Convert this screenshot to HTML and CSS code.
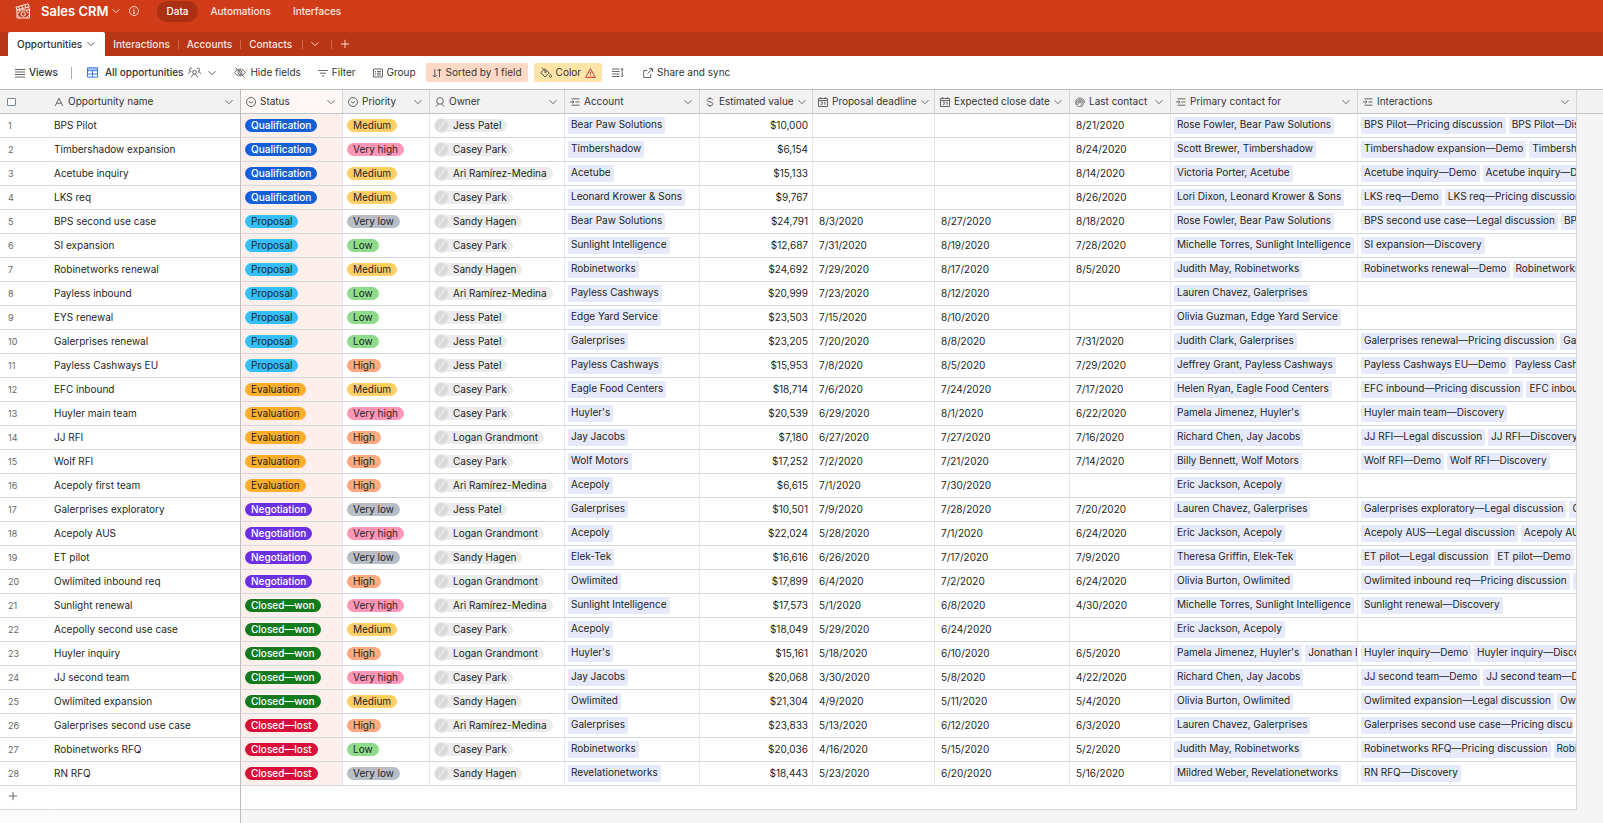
FILE: index.html
```
<!DOCTYPE html>
<html lang="en">
<head>
  <meta charset="UTF-8" />
  <meta name="viewport" content="width=device-width, initial-scale=1.0" />
  <title>Sales CRM</title>
  <link rel="stylesheet" href="styles.css">
</head>
<body>
  <!-- shared icons -->
  <svg class="sprite" aria-hidden="true">
    <symbol id="i-chevron" viewBox="0 0 8 8"><path d="M.5 2.2 4 5.7 7.5 2.2"/></symbol>
    <symbol id="i-plus" viewBox="0 0 10 10"><path d="M5 .8v8.4M.8 5h8.4"/></symbol>
    <symbol id="i-text" viewBox="0 0 10 10"><path d="M1.2 9 5 1.2 8.8 9M2.7 6.2h4.6"/></symbol>
    <symbol id="i-select" viewBox="0 0 10 10"><circle cx="5" cy="5" r="4.5"/><path d="M3 4.3 5 6.2l2-1.9"/></symbol>
    <symbol id="i-user" viewBox="0 0 10 10"><circle cx="5" cy="3.9" r="3.3"/><path d="M3.6 6.9.7 9.6M6.4 6.9l2.9 2.7"/></symbol>
    <symbol id="i-link" viewBox="0 0 10 10"><path d="M1.5 1.8h8M5.5 5h4M1.5 8.2h8M0 5h3.6M2.4 3.6 4 5 2.4 6.4"/></symbol>
    <symbol id="i-dollar" viewBox="0 0 10 10"><path d="M7.8 3.2C7.6 2 6.6 1.5 5 1.5c-1.700 0-2.800.7-2.800 1.800C2.200 5.700 8 4.200 8 6.800c0 1.200-1.200 1.800-3 1.800-1.700 0-2.900-.6-3-1.900M5 0v1.500M5 8.600V10"/></symbol>
    <symbol id="i-date" viewBox="0 0 10 10"><path d="M.5 1.500h9v8h-9zM.5 3.500h9M2.700 0v2.200M7.300 0v2.200M2.800 5h1.700L3.700 6.100c1.300 0 1.100 1.900-.9 1.500M6 5.500l1-.5v2.900"/></symbol>
    <symbol id="i-rollup" viewBox="0 0 10 10"><g stroke-width=".8"><circle cx="5" cy="5" r=".8"/><path d="M8.400 8.300A4.500 4.500 0 1 1 9.500 5v1M2.800 8A3.300 3.300 0 1 1 8.300 5.600c0 1.200-.4 2-.9 2.700M3.700 6.700A2 2 0 1 1 7 5c0 1.800-.7 3.200-2 4.500"/></g></symbol>
  </svg>

  <header class="topbar">
    <svg class="logo" viewBox="0 0 16 16">
      <path d="M1 4.200 13.200.8l1 3L2 7z"/><path d="m3.300 3.500 1.500 2.700M6.500 2.600l1.500 2.700M9.700 1.700l1.500 2.700"/>
      <path d="M2 7h12.500v8H2zM2 10c2 0 3-1 3-3M14.500 10c-2 0-3-1-3-3M2 12.500c1.500 0 2.500 1 2.500 2.500M14.500 12.500c-1.500 0-2.500 1-2.500 2.500"/>
      <circle cx="8.200" cy="11" r="2.200"/><path d="M13.200 3.800 15 7"/>
    </svg>
    <h1>Sales CRM</h1>
    <svg class="chev light"><use href="#i-chevron"/></svg>
    <svg class="info" viewBox="0 0 10 10"><circle cx="5" cy="5" r="4.500"/><path d="M4.200 4.500H5v2.800M4 7.300h2M5 2.500v1"/></svg>
    <nav class="modes">
      <a href="#" class="current">Data</a>
      <a href="#">Automations</a>
      <a href="#">Interfaces</a>
    </nav>
  </header>

  <nav class="tabs">
    <a href="#" class="tab active">Opportunities <svg class="chev"><use href="#i-chevron"/></svg></a>
    <a href="#" class="tab">Interactions</a>
    <a href="#" class="tab">Accounts</a>
    <a href="#" class="tab">Contacts</a>
    <button type="button" class="tab" aria-label="More tables"><svg class="chev light"><use href="#i-chevron"/></svg></button>
    <button type="button" class="tab" aria-label="Add table"><svg class="plus light"><use href="#i-plus"/></svg></button>
  </nav>

  <div class="toolbar">
    <button type="button" class="strong views">
      <svg viewBox="0 0 10 10"><path d="M0 1.500h10M0 4h10M0 6.500h10M0 9h10"/></svg>Views
    </button>
    <button type="button" class="strong current-view">
      <svg class="blue" viewBox="0 0 11 11"><path class="fill" d="M.5.8h10v2.700H.5z"/><path d="M.5.8h10v9.400H.5zM.5 3.700h10M.5 7h10M5.500 3.700v6.500"/></svg>
      <span>All opportunities</span>
      <svg class="people" viewBox="0 0 13 11"><circle cx="6.500" cy="5.300" r="1.900"/><path d="M3.500 10.300c.2-1.700 1.300-3 3-3s2.800 1.300 3 3M4 1.400A1.700 1.700 0 1 0 3 4.500M2.800 4.600C1.500 4.800.7 5.600.5 6.800M9 1.400a1.700 1.700 0 1 1 1 3.100M10.200 4.600c1.300.2 2.100 1 2.300 2.200"/></svg>
      <svg class="chev"><use href="#i-chevron"/></svg>
    </button>
    <button type="button">
      <svg class="wide" viewBox="0 0 12 11"><path d="M.6 5.500C2 3.300 3.800 2.200 6 2.200s4 1.100 5.400 3.300C10 7.700 8.200 8.800 6 8.800S2 7.700.6 5.500zM1.800.8l8.400 9.400"/><circle cx="6" cy="5.500" r="1.900"/></svg>Hide fields
    </button>
    <button type="button">
      <svg viewBox="0 0 10 10"><path d="M0 2.500h10M2 5.200h6M3.800 8h2.400"/></svg>Filter
    </button>
    <button type="button">
      <svg viewBox="0 0 10 10"><path d="M.5 1h9v8h-9zM2 3.500h1M4 3.500h4M2 5.200h1M4 5.200h4M2 7h1M4 7h4"/></svg>Group
    </button>
    <button type="button" class="sorted">
      <svg viewBox="0 0 10 10"><path d="M2.800 1v8M.8 7l2 2 2-2M7.500 9V1M5.500 3l2-2 2 2"/></svg>Sorted by 1 field
    </button>
    <button type="button" class="colored">
      <svg class="wide" viewBox="0 0 12 11"><path d="M4.800 1.800 9.300 6 5 10 .7 5.800zM1.800.6l3.600 3.600"/><circle cx="5.500" cy="5" r=".8"/><path d="M10.600 7.400c.8 1.100 1 1.500 1 1.900a1 1 0 0 1-2 0c0-.4.200-.8 1-1.900z"/></svg>Color
      <svg class="warn" viewBox="0 0 11 10"><path d="M5.500.7 10.400 9.400H.6zM5.500 3.800v2.700M5.500 7.500v.9"/></svg>
    </button>
    <button type="button" aria-label="Row height">
      <svg class="wide" viewBox="0 0 12 10"><path d="M0 1.500h7.500M0 4h7.500M0 6.500h7.500M0 9h7.500M10.200 1v8.500M9.200 2.200l1-1.200 1 1.200M9.200 8.200l1 1.200 1-1.200"/></svg>
    </button>
    <button type="button" class="share">
      <svg viewBox="0 0 10 10"><path d="M4.200 2.500H.7v7h7V6M6 .6h3.500v3.500M9.400.7 4.500 5.500"/></svg>Share and sync
    </button>
  </div>

  <main class="grid">
    <table>
      <colgroup>
        <col class="c-num"><col class="c-name"><col class="c-status"><col class="c-priority"><col class="c-owner"><col class="c-account"><col class="c-value"><col class="c-proposal"><col class="c-close"><col class="c-last"><col class="c-primary"><col class="c-inter"><col>
      </colgroup>
      <thead>
        <tr id="head"></tr>
      </thead>
      <tbody id="rows"></tbody>
      <tfoot>
        <tr>
          <td class="num"><button type="button" class="add" aria-label="Add record"><svg class="plus"><use href="#i-plus"/></svg></button></td>
          <td class="name"></td>
          <td colspan="10" class="rest"></td>
          <td class="filler"></td>
        </tr>
      </tfoot>
    </table>
    <div class="below"><div class="below-frozen"></div></div>
  </main>

  <script src="script.js"></script>
</body>
</html>
```
FILE: styles.css
```
* {
  box-sizing: border-box;
}
body {
  margin: 0;
  min-height: 100vh;
  display: flex;
  flex-direction: column;
  font-family: Inter, "Liberation Sans", sans-serif;
  font-size: 10px;
  line-height: 13px;
  color: #1d1f25;
  background: #fff;
}
a {
  color: inherit;
  text-decoration: none;
}
button {
  font: inherit;
  color: inherit;
  background: none;
  border: none;
  padding: 0;
}
svg {
  flex: none;
  width: 10px;
  height: 10px;
  fill: none;
  stroke: #666;
  stroke-width: 1;
}
.sprite {
  position: absolute;
  width: 0;
  height: 0;
}
.chev {
  width: 8px;
  height: 8px;
}
.light {
  stroke: #f9d5cb;
}

/* top bar */
.topbar {
  display: flex;
  align-items: center;
  height: 32px;
  padding: 0 15px 10px;
  background: #d03c18;
  color: #fff;
}
.topbar .logo {
  width: 16px;
  height: 16px;
  stroke: #fdeeea;
}
.topbar h1 {
  margin: 0 4px 0 10px;
  font-size: 13px;
  line-height: 16px;
  font-weight: 600;
}
.topbar .info {
  margin-left: 9px;
  stroke: #f9d5cb;
}
.modes {
  display: flex;
  gap: 4px;
  margin-left: 18px;
  font-weight: 500;
  color: #fbe6e0;
}
.modes a {
  padding: 4px 9px;
  border-radius: 11px;
}
.modes .current {
  background: #a93013;
  color: #fff;
}

/* table tabs */
.tabs {
  display: flex;
  align-items: center;
  height: 24px;
  padding-left: 8px;
  background: #b83616;
}
.tab {
  display: flex;
  align-items: center;
  height: 24px;
  padding: 0 8px;
  font-weight: 500;
  color: #fbe6e0;
}
.tab.active {
  gap: 5px;
  padding: 0 10px 0 9px;
  background: #fff;
  color: #333;
  border-radius: 2px 2px 0 0;
}
.tab + .tab:not(.active)::before {
  content: "";
  width: 1px;
  height: 9px;
  margin: 0 8px 0 -8px;
  background: #cf6a50;
}
.tab.active + .tab::before {
  display: none;
}
button.tab {
  padding: 0 10px;
}

/* toolbar */
.toolbar {
  display: flex;
  align-items: center;
  height: 33px;
  padding: 0 16px 0 8px;
  color: #333;
}
.toolbar button {
  display: flex;
  align-items: center;
  gap: 4px;
  height: 19px;
  padding: 0 7px;
  margin-right: 3px;
  border-radius: 2px;
}
.toolbar .strong {
  font-weight: 500;
}
.toolbar .wide {
  width: 12px;
  height: 11px;
}
.toolbar .people {
  width: 13px;
  height: 11px;
  margin: 0 3px 0 1px;
}
.toolbar .views {
  padding-right: 14px;
  margin-right: 15px;
  position: relative;
}
.toolbar .views::after {
  content: "";
  position: absolute;
  right: 0;
  width: 1px;
  height: 12px;
  background: #aaa;
}
.toolbar .current-view {
  padding: 0;
  margin-right: 11px;
}
.toolbar .current-view span {
  margin-left: 3px;
}
.toolbar .blue {
  width: 11px;
  height: 11px;
  stroke: #3e7be0;
}
.toolbar .blue .fill {
  fill: #a9c6f5;
  stroke: none;
}
.toolbar .sorted {
  padding: 0 6px;
  margin-right: 6px;
  background: #ffd9c6;
}
.toolbar .colored {
  padding: 0 6px;
  background: #ffe4a8;
}
.toolbar .sorted svg,
.toolbar .colored svg {
  stroke: #555;
}
.toolbar .colored .warn {
  width: 11px;
  stroke: #dc3545;
}
.toolbar .share {
  margin-left: 2px;
}

/* grid */
.grid {
  flex: 1;
  display: flex;
  flex-direction: column;
  border-top: 1px solid #bcbdbf;
}
table {
  width: 100%;
  table-layout: fixed;
  border-collapse: separate;
  border-spacing: 0;
}
.c-num { width: 49px; }
.c-name { width: 192px; }
.c-status { width: 102px; }
.c-priority { width: 87px; }
.c-owner { width: 135px; }
.c-account { width: 135px; }
.c-value { width: 113px; }
.c-proposal { width: 122px; }
.c-close { width: 135px; }
.c-last { width: 101px; }
.c-primary { width: 187px; }
.c-inter { width: 219px; }

th {
  height: 24px;
  padding: 0;
  font-weight: 400;
  text-align: left;
  color: #333;
  background: #f2f2f2;
  border-bottom: 1px solid #c4c5c7;
  border-right: 1px solid #d3d4d6;
}
th:first-child,
th:last-child {
  border-right: none;
}
.field {
  display: flex;
  align-items: center;
  gap: 4px;
  padding: 0 7px 0 5px;
  white-space: nowrap;
}
.field .chev {
  margin-left: auto;
}
th.status {
  background: #fdf8f5;
}
th input {
  appearance: none;
  display: block;
  width: 9px;
  height: 8px;
  margin: 0 0 0 7px;
  border: 1px solid #6f8a97;
  border-radius: 1px;
  background: #fff;
}

td {
  height: 24px;
  padding: 0 4px 0 6px;
  overflow: hidden;
  white-space: nowrap;
  background: #fff;
  border-bottom: 1px solid #d6d7d9;
  border-right: 1px solid #e6e7e9;
}
td.num {
  padding: 0 0 0 8px;
  font-size: 9px;
  color: #666;
  border-right-color: #fff;
}
td.name {
  padding-left: 5px;
}
th.name,
td.name {
  border-right-color: #bcbdbf;
}
td.status {
  background: #fdf0ec;
}
td.status,
td.priority,
td.owner {
  padding: 0 0 0 4px;
}
td.value {
  text-align: right;
}
td.filler {
  background: #f5f5f5;
  border: none;
}
td.inter,
td.rest {
  border-right-color: #d6d7d9;
}
td.links {
  padding: 0;
  vertical-align: top;
}

.pill {
  display: block;
  width: fit-content;
  padding: 0 6px;
  border-radius: 7px;
}
.qualification { background: #155fd6; }
.proposal { background: #34bff9; }
.evaluation { background: #fcaf2c; }
.negotiation { background: #6d2fe3; }
.won { background: #127c1c; }
.lost { background: #d90f3a; }
.qualification,
.negotiation,
.won,
.lost {
  color: #fff;
  font-weight: 500;
}
.medium { background: #ffcf66; }
.very-high { background: #ff98b6; }
.very-low { background: #b9bdc5; }
.low { background: #8fdb8c; }
.high { background: #ffa981; }

.person {
  display: flex;
  align-items: center;
}
.person svg {
  position: relative;
  width: 15px;
  height: 15px;
  stroke: #ebebeb;
}
.person span {
  padding: 0 6px 0 12px;
  margin-left: -8px;
  border-radius: 7px;
  background: #ebebeb;
}

.chips {
  display: flex;
  gap: 3px;
  padding: 3px 3px 0;
}
.chip {
  flex: none;
  max-width: 100%;
  height: 17px;
  padding: 0 3px;
  overflow: hidden;
  line-height: 15px;
  border-radius: 2px;
  background: #e6e9f7;
}

.add {
  display: block;
}
.below {
  flex: 1;
  display: flex;
  background: #f5f5f5;
}
.below-frozen {
  width: 241px;
  background: #fbfbfb;
  border-right: 1px solid #bcbdbf;
}
```
FILE: script.js
```
const fields = [
  ['name', 'text', 'Opportunity name'],
  ['status', 'select', 'Status'],
  ['priority', 'select', 'Priority'],
  ['owner', 'user', 'Owner'],
  ['account', 'link', 'Account'],
  ['value', 'dollar', 'Estimated value'],
  ['proposal-date', 'date', 'Proposal deadline'],
  ['close-date', 'date', 'Expected close date'],
  ['last', 'rollup', 'Last contact'],
  ['primary', 'link', 'Primary contact for'],
  ['inter', 'link', 'Interactions']
];

// name | status | priority | owner | account | value | proposal | close | last contact | primary contacts | interactions
const data = `
BPS Pilot|Qualification|Medium|Jess Patel|Bear Paw Solutions|$10,000|||8/21/2020|Rose Fowler, Bear Paw Solutions|BPS Pilot—Pricing discussion;BPS Pilot—Discovery
Timbershadow expansion|Qualification|Very high|Casey Park|Timbershadow|$6,154|||8/24/2020|Scott Brewer, Timbershadow|Timbershadow expansion—Demo;Timbershadow expansion—Discovery
Acetube inquiry|Qualification|Medium|Ari Ramírez-Medina|Acetube|$15,133|||8/14/2020|Victoria Porter, Acetube|Acetube inquiry—Demo;Acetube inquiry—Discovery
LKS req|Qualification|Medium|Casey Park|Leonard Krower & Sons|$9,767|||8/26/2020|Lori Dixon, Leonard Krower & Sons|LKS req—Demo;LKS req—Pricing discussion
BPS second use case|Proposal|Very low|Sandy Hagen|Bear Paw Solutions|$24,791|8/3/2020|8/27/2020|8/18/2020|Rose Fowler, Bear Paw Solutions|BPS second use case—Legal discussion;BPS second use case—Demo
SI expansion|Proposal|Low|Casey Park|Sunlight Intelligence|$12,687|7/31/2020|8/19/2020|7/28/2020|Michelle Torres, Sunlight Intelligence|SI expansion—Discovery
Robinetworks renewal|Proposal|Medium|Sandy Hagen|Robinetworks|$24,692|7/29/2020|8/17/2020|8/5/2020|Judith May, Robinetworks|Robinetworks renewal—Demo;Robinetworks renewal—Discovery
Payless inbound|Proposal|Low|Ari Ramírez-Medina|Payless Cashways|$20,999|7/23/2020|8/12/2020||Lauren Chavez, Galerprises|
EYS renewal|Proposal|Low|Jess Patel|Edge Yard Service|$23,503|7/15/2020|8/10/2020||Olivia Guzman, Edge Yard Service|
Galerprises renewal|Proposal|Low|Jess Patel|Galerprises|$23,205|7/20/2020|8/8/2020|7/31/2020|Judith Clark, Galerprises|Galerprises renewal—Pricing discussion;Galerprises renewal—Demo
Payless Cashways EU|Proposal|High|Jess Patel|Payless Cashways|$15,953|7/8/2020|8/5/2020|7/29/2020|Jeffrey Grant, Payless Cashways|Payless Cashways EU—Demo;Payless Cashways EU—Discovery
EFC inbound|Evaluation|Medium|Casey Park|Eagle Food Centers|$18,714|7/6/2020|7/24/2020|7/17/2020|Helen Ryan, Eagle Food Centers|EFC inbound—Pricing discussion;EFC inbound—Demo
Huyler main team|Evaluation|Very high|Casey Park|Huyler's|$20,539|6/29/2020|8/1/2020|6/22/2020|Pamela Jimenez, Huyler's|Huyler main team—Discovery
JJ RFI|Evaluation|High|Logan Grandmont|Jay Jacobs|$7,180|6/27/2020|7/27/2020|7/16/2020|Richard Chen, Jay Jacobs|JJ RFI—Legal discussion;JJ RFI—Discovery
Wolf RFI|Evaluation|High|Casey Park|Wolf Motors|$17,252|7/2/2020|7/21/2020|7/14/2020|Billy Bennett, Wolf Motors|Wolf RFI—Demo;Wolf RFI—Discovery
Acepoly first team|Evaluation|High|Ari Ramírez-Medina|Acepoly|$6,615|7/1/2020|7/30/2020||Eric Jackson, Acepoly|
Galerprises exploratory|Negotiation|Very low|Jess Patel|Galerprises|$10,501|7/9/2020|7/28/2020|7/20/2020|Lauren Chavez, Galerprises|Galerprises exploratory—Legal discussion;Galerprises exploratory—Demo
Acepoly AUS|Negotiation|Very high|Logan Grandmont|Acepoly|$22,024|5/28/2020|7/1/2020|6/24/2020|Eric Jackson, Acepoly|Acepoly AUS—Legal discussion;Acepoly AUS—Demo
ET pilot|Negotiation|Very low|Sandy Hagen|Elek-Tek|$16,616|6/26/2020|7/17/2020|7/9/2020|Theresa Griffin, Elek-Tek|ET pilot—Legal discussion;ET pilot—Demo;ET pilot—Discovery
Owlimited inbound req|Negotiation|High|Logan Grandmont|Owlimited|$17,899|6/4/2020|7/2/2020|6/24/2020|Olivia Burton, Owlimited|Owlimited inbound req—Pricing discussion;Owlimited inbound req—Demo
Sunlight renewal|Closed—won|Very high|Ari Ramírez-Medina|Sunlight Intelligence|$17,573|5/1/2020|6/8/2020|4/30/2020|Michelle Torres, Sunlight Intelligence|Sunlight renewal—Discovery
Acepolly second use case|Closed—won|Medium|Casey Park|Acepoly|$18,049|5/29/2020|6/24/2020||Eric Jackson, Acepoly|
Huyler inquiry|Closed—won|High|Logan Grandmont|Huyler's|$15,161|5/18/2020|6/10/2020|6/5/2020|Pamela Jimenez, Huyler's;Jonathan Burke, Huyler's|Huyler inquiry—Demo;Huyler inquiry—Discovery
JJ second team|Closed—won|Very high|Casey Park|Jay Jacobs|$20,068|3/30/2020|5/8/2020|4/22/2020|Richard Chen, Jay Jacobs|JJ second team—Demo;JJ second team—Discovery
Owlimited expansion|Closed—won|Medium|Sandy Hagen|Owlimited|$21,304|4/9/2020|5/11/2020|5/4/2020|Olivia Burton, Owlimited|Owlimited expansion—Legal discussion;Owlimited expansion—Demo
Galerprises second use case|Closed—lost|High|Ari Ramírez-Medina|Galerprises|$23,833|5/13/2020|6/12/2020|6/3/2020|Lauren Chavez, Galerprises|Galerprises second use case—Pricing discussion
Robinetworks RFQ|Closed—lost|Low|Casey Park|Robinetworks|$20,036|4/16/2020|5/15/2020|5/2/2020|Judith May, Robinetworks|Robinetworks RFQ—Pricing discussion;Robinetworks RFQ—Demo
RN RFQ|Closed—lost|Very low|Sandy Hagen|Revelationetworks|$18,443|5/23/2020|6/20/2020|5/16/2020|Mildred Weber, Revelationetworks|RN RFQ—Discovery
`.trim().split('\n').map(line => line.split('|'));

const slug = text => text.toLowerCase().replace('closed—', '').replace(' ', '-');
const pill = text => `<span class="pill ${slug(text)}">${text}</span>`;
const person = text => `<div class="person"><svg viewBox="0 0 15 15"><circle cx="7.5" cy="7.5" r="7" fill="#dadada"/><path d="M4 12 11 3" stroke-width="1.5"/></svg><span>${text}</span></div>`;
const chip = text => `<span class="chip">${text.replace('&', '&amp;')}</span>`;
const chips = text => text ? `<div class="chips">${text.split(';').map(chip).join('')}</div>` : '';

const render = {
  status: pill,
  priority: pill,
  owner: person,
  account: chips,
  primary: chips,
  inter: chips
};

document.getElementById('head').innerHTML =
  '<th><input type="checkbox" aria-label="Select all records"></th>' +
  fields.map(([key, icon, label]) =>
    `<th class="${key}"><div class="field"><svg><use href="#i-${icon}"/></svg>${label}<svg class="chev"><use href="#i-chevron"/></svg></div></th>`
  ).join('') +
  '<th></th>';

document.getElementById('rows').innerHTML = data.map((row, i) => {
  const cells = row.map((text, n) => {
    const key = fields[n][0];
    const draw = render[key];
    return `<td class="${key}${draw === chips ? ' links' : ''}">${draw ? draw(text) : text}</td>`;
  });
  return `<tr><td class="num">${i + 1}</td>${cells.join('')}<td class="filler"></td></tr>`;
}).join('');
```
